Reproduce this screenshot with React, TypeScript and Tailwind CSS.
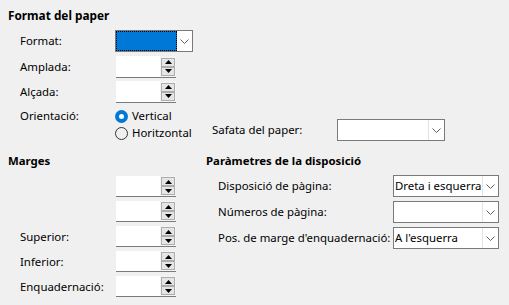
import React from "react";

function Tri({ up }: { up?: boolean }) {
  return (
    <svg width="7" height="4" viewBox="0 0 7 4">
      {up ? <polygon points="0,4 7,4 3.5,0" fill="#000" /> : <polygon points="0,0 7,0 3.5,4" fill="#000" />}
    </svg>
  );
}

function Spin({ tall }: { tall?: boolean }) {
  return (
    <div className={tall ? "flex w-[60px] h-[22px] border-b border-[#7a7a7a] bg-white" : "flex w-[60px] h-[21px] border-b border-[#7a7a7a] bg-white"}>
      <div className="flex-1 bg-white" />
      <div className="w-[16px] flex flex-col items-center justify-center bg-[#f4f4f4]">
        <div className="w-[14px] h-[9px] border border-[#adadad] bg-[#e5e5e5] flex items-center justify-center">
          <Tri up />
        </div>
        <div className="w-[14px] h-[9px] border border-[#adadad] bg-[#e5e5e5] flex items-center justify-center">
          <Tri />
        </div>
      </div>
    </div>
  );
}

function Chevron() {
  return (
    <svg width="9" height="5" viewBox="0 0 9 5">
      <polyline points="0.5,0.5 4.5,4.5 8.5,0.5" fill="none" stroke="#606060" strokeWidth="1" />
    </svg>
  );
}

function Combo({ className, text }: { className: string; text?: string }) {
  return (
    <div className={"flex h-[22px] border border-[#7a7a7a] bg-white " + className}>
      <div className="flex-1 flex items-center pl-[1px] overflow-hidden whitespace-nowrap text-black">{text}</div>
      <div className="w-[16px] border-l border-[#e3e3e3] flex items-center justify-center">
        <Chevron />
      </div>
    </div>
  );
}

function RadioOn() {
  return (
    <div className="w-[13px] h-[13px] rounded-full bg-[#0078d7] flex items-center justify-center">
      <div className="w-[5px] h-[5px] rounded-full bg-white" />
    </div>
  );
}

function RadioOff() {
  return <div className="w-[13px] h-[13px] rounded-full border border-[#333333]" />;
}

export default function App() {
  return (
    <div
      className="w-[509px] h-[305px] bg-[#f0f0f0] text-[11.4px] leading-[16px] text-black overflow-hidden"
      style={{ fontFamily: '"Segoe UI", "Noto Sans", sans-serif' }}
    >
      <div className="pl-[8px] pt-[7px]">
        <div className="font-bold h-[16px] text-[11.8px]">Format del paper</div>
        <div className="mt-[7px] flex items-center h-[22px]">
          <div className="w-[107px] pl-[12px]">Format:</div>
          <div className="flex w-[78px] h-[22px] border border-[#7a7a7a] bg-white">
            <div className="w-[61px] bg-[#0078d7] border border-dotted border-black" />
            <div className="flex-1 flex items-center justify-center">
              <Chevron />
            </div>
          </div>
        </div>
        <div className="mt-[4px] flex items-center h-[22px]">
          <div className="w-[108px] pl-[12px]">Amplada:</div>
          <Spin tall />
        </div>
        <div className="mt-[3px] flex items-center h-[22px]">
          <div className="w-[108px] pl-[12px]">Alçada:</div>
          <Spin tall />
        </div>
        <div className="mt-[5px] flex h-[34px]">
          <div className="w-[107px] pl-[12px] h-[16px] leading-[16px]">Orientació:</div>
          <div className="w-[97px] flex flex-col gap-[1px]">
            <div className="flex items-center h-[16px] gap-[4px]">
              <RadioOn />
              <span>Vertical</span>
            </div>
            <div className="flex items-center h-[16px] gap-[4px]">
              <RadioOff />
              <span>Horitzontal</span>
            </div>
          </div>
          <div className="pt-[11px] flex">
            <div className="w-[125px] h-[22px] flex items-center">Safata del paper:</div>
            <Combo className="w-[108px]" />
          </div>
        </div>
      </div>
      <div className="mt-[11px] flex pl-[8px]">
        <div className="w-[197px] flex flex-col">
          <div className="font-bold h-[16px]">Marges</div>
          <div className="mt-[7px] flex flex-col gap-[4px]">
            <div className="flex items-center h-[21px]">
              <div className="w-[108px] pl-[12px]"></div>
              <Spin />
            </div>
            <div className="flex items-center h-[21px]">
              <div className="w-[108px] pl-[12px]"></div>
              <Spin />
            </div>
            <div className="flex items-center h-[21px]">
              <div className="w-[108px] pl-[12px]">Superior:</div>
              <Spin />
            </div>
            <div className="flex items-center h-[21px]">
              <div className="w-[108px] pl-[12px]">Inferior:</div>
              <Spin />
            </div>
            <div className="flex items-center h-[21px]">
              <div className="w-[108px] pl-[12px]">Enquadernació:</div>
              <Spin />
            </div>
          </div>
        </div>
        <div className="flex flex-col">
          <div className="font-bold h-[16px] pl-[1px]">Paràmetres de la disposició</div>
          <div className="mt-[6px] flex flex-col gap-[4px]">
            <div className="flex items-center h-[22px]">
              <div className="w-[188px] pl-[13px] whitespace-nowrap">Disposició de pàgina:</div>
              <Combo className="w-[106px]" text="Dreta i esquerra" />
            </div>
            <div className="flex items-center h-[22px]">
              <div className="w-[188px] pl-[13px] whitespace-nowrap">Números de pàgina:</div>
              <Combo className="w-[106px]" />
            </div>
            <div className="flex items-center h-[22px]">
              <div className="w-[188px] pl-[13px] whitespace-nowrap">Pos. de marge d'enquadernació:</div>
              <Combo className="w-[106px]" text="A l'esquerra" />
            </div>
          </div>
        </div>
      </div>
    </div>
  );
}
